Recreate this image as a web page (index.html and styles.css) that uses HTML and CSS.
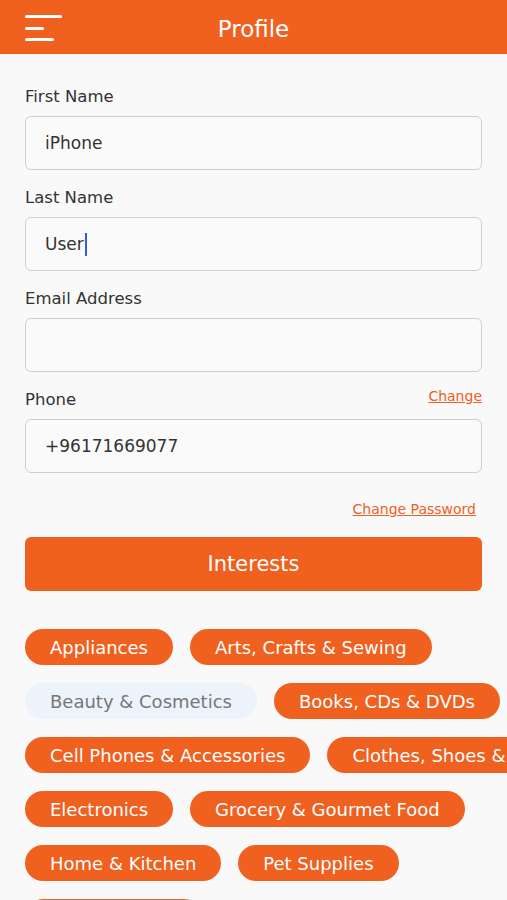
FILE: index.html
```html
<!DOCTYPE html>
<html lang="en">
<head>
    <meta charset="UTF-8">
    <title>Profile</title>
    <link rel="stylesheet" href="styles.css">
</head>
<body>

<header class="topbar">
    <button class="menu-btn" aria-label="Menu">
        <span class="bar bar-long"></span>
        <span class="bar bar-short"></span>
        <span class="bar bar-mid"></span>
    </button>
    <h1>Profile</h1>
</header>

<main class="profile">
    <!-- Profile fields -->
    <div class="field">
        <label>First Name</label>
        <div class="input">iPhone</div>
    </div>
    <div class="field">
        <label>Last Name</label>
        <div class="input">User<span class="caret"></span></div>
    </div>
    <div class="field">
        <label>Email Address</label>
        <div class="input"></div>
    </div>
    <div class="field">
        <div class="label-row">
            <label>Phone</label>
            <a href="#" class="link link-small">Change</a>
        </div>
        <div class="input">+96171669077</div>
    </div>

    <div class="password-row">
        <a href="#" class="link">Change Password</a>
    </div>

    <button class="interests-btn">Interests</button>

    <!-- Interests -->
    <div class="chips">
        <div class="chip-row">
            <span class="chip">Appliances</span>
            <span class="chip">Arts, Crafts &amp; Sewing</span>
        </div>
        <div class="chip-row">
            <span class="chip off">Beauty &amp; Cosmetics</span>
            <span class="chip">Books, CDs &amp; DVDs</span>
        </div>
        <div class="chip-row">
            <span class="chip">Cell Phones &amp; Accessories</span>
            <span class="chip">Clothes, Shoes &amp; Jewelry</span>
        </div>
        <div class="chip-row">
            <span class="chip">Electronics</span>
            <span class="chip">Grocery &amp; Gourmet Food</span>
        </div>
        <div class="chip-row">
            <span class="chip">Home &amp; Kitchen</span>
            <span class="chip">Pet Supplies</span>
        </div>
        <div class="chip-row">
            <span class="chip">Toys &amp; Games</span>
        </div>
    </div>
</main>

</body>
</html>
```

FILE: styles.css
```css
html, body {
    margin: 0;
    padding: 0;
}
* {
    box-sizing: border-box;
}
body {
    font-family: "DejaVu Sans", Arial, sans-serif;
    background-color: #f9f9f9;
    color: #333;
    width: 507px;
    height: 900px;
    overflow: hidden;
}
.topbar {
    height: 54px;
    background-color: #f0601f;
    display: flex;
    align-items: center;
    justify-content: center;
    position: relative;
}
.topbar h1 {
    margin: 0 0 -3px;
    color: white;
    font-size: 23px;
    font-weight: normal;
}
.menu-btn {
    position: absolute;
    left: 25px;
    top: 15px;
    width: 40px;
    height: 28px;
    padding: 0;
    border: none;
    background: none;
    display: flex;
    flex-direction: column;
    gap: 8.5px;
}
.bar {
    display: block;
    height: 3px;
    border-radius: 2px;
    background: white;
}
.bar-long { width: 37px; }
.bar-short { width: 19px; }
.bar-mid { width: 29px; }
.profile {
    padding: 32px 25px 0;
}
.field {
    margin-bottom: 17px;
}
.field label {
    display: block;
    font-size: 16.5px;
    line-height: 22px;
    margin-bottom: 8px;
    color: #333;
}
.label-row {
    display: flex;
    justify-content: space-between;
    align-items: flex-start;
}
.input {
    height: 54px;
    border: 1.5px solid #cfcfcf;
    border-radius: 6px;
    background: #fafafa;
    padding: 0 19px;
    display: flex;
    align-items: center;
    font-size: 17px;
    color: #333;
}
.caret {
    display: inline-block;
    width: 2px;
    height: 23px;
    background: #3a5bd9;
    margin-left: 1px;
}
.link {
    color: #f0601f;
    font-size: 14px;
    text-decoration: underline;
}
.link-small {
    margin-top: -1px;
}
.password-row {
    display: flex;
    justify-content: flex-end;
    padding-right: 6px;
    margin-top: 28px;
}
.interests-btn {
    display: block;
    width: 100%;
    height: 54px;
    margin-top: 20px;
    border: none;
    border-radius: 6px;
    background-color: #f0601f;
    color: white;
    font-family: inherit;
    font-size: 21px;
}
.chips {
    margin-top: 38px;
    display: flex;
    flex-direction: column;
    gap: 18px;
}
.chip-row {
    display: flex;
    gap: 17px;
    white-space: nowrap;
}
.chip {
    height: 36px;
    padding: 0 25px;
    border-radius: 18px;
    background-color: #f0601f;
    color: white;
    font-size: 18px;
    display: flex;
    align-items: center;
    flex-shrink: 0;
}
.chip.off {
    background-color: #edf3fb;
    color: #777;
}
```
